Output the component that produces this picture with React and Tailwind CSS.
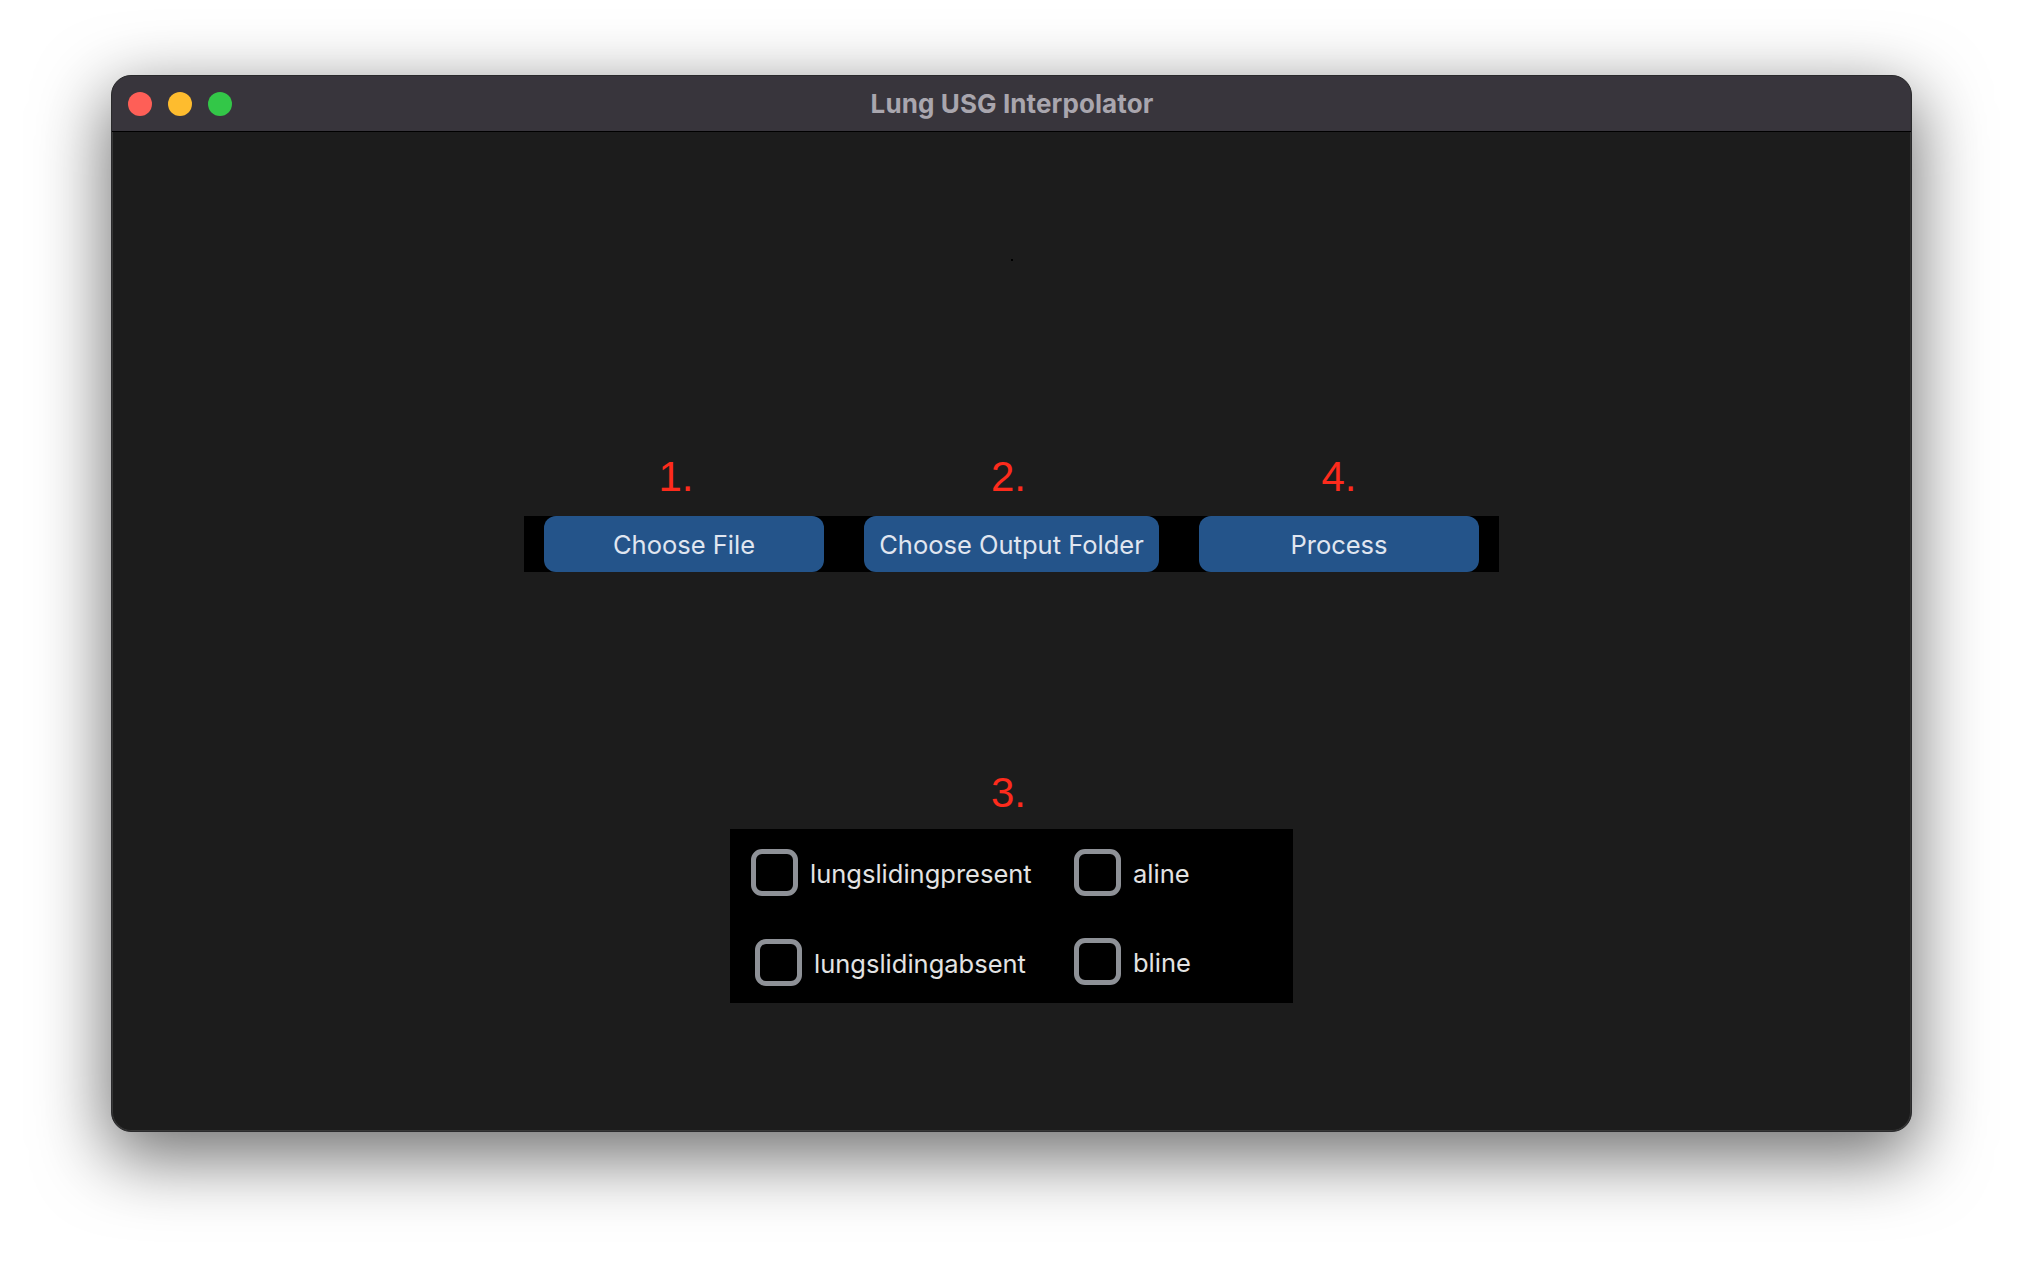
import React from "react";

function Checkbox({ label, className = "" }) {
  return (
    <div className={"flex items-center gap-[12px] " + className}>
      <div className="w-[47px] h-[47px] rounded-[11px] border-[5px] border-[#8e9197] shrink-0" />
      <span className="text-[25.5px] text-[#e3e3e3] leading-none pt-[3px]">{label}</span>
    </div>
  );
}

export default function App() {
  const cols = [
    { n: "1.", label: "Choose File", w: "w-[280px]", lab: "pr-[16px]" },
    { n: "2.", label: "Choose Output Folder", w: "w-[295px]", lab: "pr-[6px]" },
    { n: "4.", label: "Process", w: "w-[280px]", lab: "" },
  ];
  return (
    <div
      className="w-[2024px] h-[1280px] bg-white pl-[111px] pt-[75px] overflow-hidden"
      style={{ fontFamily: "Inter, 'Noto Sans', sans-serif" }}
    >
      <div className="w-[1801px] h-[1057px] rounded-[20px] overflow-hidden border border-[#2a2a2c] bg-[#1c1c1c] shadow-[0_22px_70px_4px_rgba(0,0,0,0.56),inset_0_0_0_1px_rgba(255,255,255,0.12)] flex flex-col">
        {/* Title bar */}
        <div className="h-[56px] shrink-0 bg-[#38353c] border-b border-black grid grid-cols-[1fr_auto_1fr] items-center">
          <div className="flex items-center gap-[16px] pl-[16px] pt-[1px]">
            <div className="w-[24px] h-[24px] rounded-full bg-[#fe5f57]" />
            <div className="w-[24px] h-[24px] rounded-full bg-[#febc2e]" />
            <div className="w-[24px] h-[24px] rounded-full bg-[#33c748]" />
          </div>
          <div className="text-[26px] font-bold text-[#a9a6ae] tracking-[0.1px] pl-[1px]">Lung USG Interpolator</div>
          <div />
        </div>

        {/* Body */}
        <div className="flex-1 flex flex-col items-center">
          <div className="mt-[127px] w-[2px] h-[2px] bg-black" />

          <div className="mt-[195px] flex flex-col items-center">
            <div
              className="flex gap-[40px] px-[20px] text-[42px] leading-none text-[#fd2b1c]"
              style={{ fontFamily: "'Liberation Sans', Arial, sans-serif" }}
            >
              {cols.map((c) => (
                <div key={c.n} className={c.w + " text-center " + c.lab}>
                  {c.n}
                </div>
              ))}
            </div>
            <div className="mt-[18px] flex gap-[40px] px-[20px] bg-black">
              {cols.map((c) => (
                <button
                  key={c.n}
                  className={c.w + " h-[56px] rounded-[12px] bg-[#24548a] text-[25.5px] text-[#e0e6f0] pt-[3px]"}
                >
                  {c.label}
                </button>
              ))}
            </div>
          </div>

          <div
            className="mt-[200px] mr-[6px] text-[42px] leading-none text-[#fd2b1c]"
            style={{ fontFamily: "'Liberation Sans', Arial, sans-serif" }}
          >
            3.
          </div>

          <div className="mt-[15px] w-[563px] h-[174px] bg-black pl-[21px] pt-[20px] grid grid-cols-[323px_1fr] grid-rows-[47px_47px] gap-y-[42px]">
            <Checkbox label="lungslidingpresent" />
            <Checkbox label="aline" />
            <Checkbox label="lungslidingabsent" className="ml-[4px] mt-[1px]" />
            <Checkbox label="bline" className="mt-[0px]" />
          </div>
        </div>
      </div>
    </div>
  );
}
